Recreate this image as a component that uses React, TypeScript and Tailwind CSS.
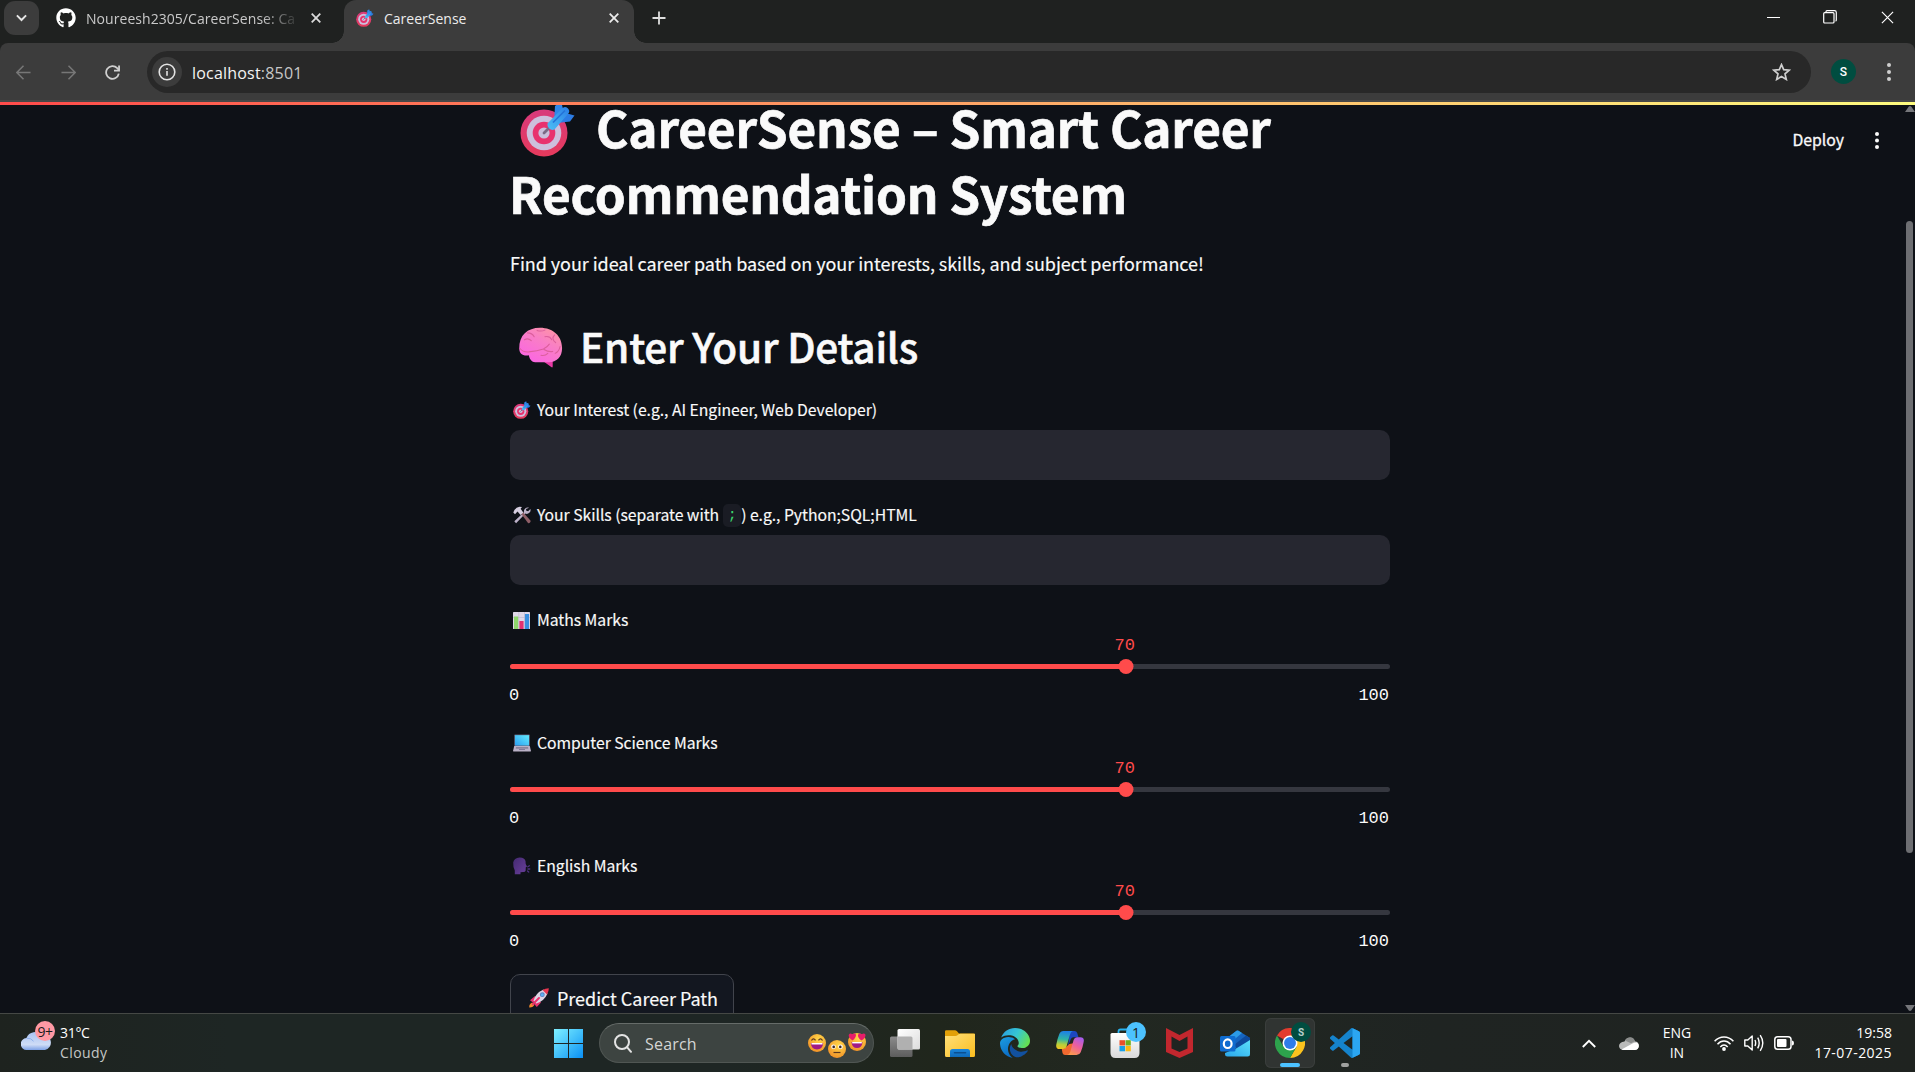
import React from "react";
import { FaGithub } from "react-icons/fa";

type IconProps = { className?: string };

/* ---------- Emoji drawings ---------- */

function Target({ className }: IconProps) {
  return (
    <svg viewBox="0 0 56 56" className={className}>
      <defs>
        <linearGradient id="tgRim" x1="0" y1="0" x2="0" y2="1">
          <stop offset="0" stopColor="#d83a7c" />
          <stop offset="1" stopColor="#e63a5c" />
        </linearGradient>
        <linearGradient id="tgDart" x1="0" y1="1" x2="1" y2="0">
          <stop offset="0" stopColor="#4cc0f5" />
          <stop offset="1" stopColor="#2b7fe6" />
        </linearGradient>
      </defs>
      <circle cx="24" cy="32" r="23.5" fill="url(#tgRim)" />
      <circle cx="24" cy="32" r="17.3" fill="#cdbfdc" />
      <circle cx="24" cy="32" r="11.3" fill="#e8326e" />
      <circle cx="24" cy="32" r="5.6" fill="#c9bfdb" />
      <path d="M24 32 32 24" stroke="#7b6a86" strokeWidth="2.8" strokeLinecap="round" />
      <path d="M34.5 13.5 35 5 41 .5 43.500 9.500 34.500 19Z" fill="#2f86e8" />
      <path d="M36 21 45.500 12 54.500 14.500 50 20.500 41.500 21.500Z" fill="#2c7ce4" />
      <path d="M27.500 22.500 42 7.500a3 3 0 0 1 6 5.500L34.500 28.500a5.200 5.200 0 0 1-7-6Z" fill="url(#tgDart)" />
      <path d="M33 21.500 45 9.500" stroke="#2473d8" strokeWidth="1.600" />
    </svg>
  );
}

function Brain({ className }: IconProps) {
  return (
    <svg viewBox="0 0 46 42" className={className}>
      <defs>
        <linearGradient id="brn" x1="1" y1="0" x2="0.3" y2="1">
          <stop offset="0" stopColor="#ff9a9c" />
          <stop offset="0.45" stopColor="#f97fc4" />
          <stop offset="1" stopColor="#fb66e2" />
        </linearGradient>
      </defs>
      <path d="M25 34 35 33v7.500q-.3 1.500-1.500.5L26 35.500Z" fill="#e83aa6" />
      <path d="M.7 22C.5 8.500 9 .8 22 .8 35.500.8 44.600 9.500 44.600 21.500 44.600 31 39 36 31 36H17c-3.500 0-5.500-2.500-6.500-7C4.500 30 .800 27.500.7 22Z" fill="url(#brn)" />
      <g fill="none" stroke="#dc5f9c" strokeWidth="1.100" strokeLinecap="round">
        <path d="M6 13q4-2 7 1M9 6q5 0 7 4" />
        <path d="M19 3.500q4 1.500 8-.3M27 10q5-1 7 3M37 8q-4 4 1 8" />
        <path d="M1.500 22q3 4 9 3.500 9-1 15-3 4-2 6-5" />
        <path d="M26 23q5 3 9 2M30 27q-3 3-7 2M42.500 20q-1 5-5 7" />
      </g>
    </svg>
  );
}

function Tools({ className }: IconProps) {
  return (
    <svg viewBox="0 0 18 18" className={className}>
      <path d="M16.200 1.800a3.800 3.800 0 0 0-5.200 4.400L1.300 15.300l1.800 1.900 9.300-9.600a3.800 3.800 0 0 0 5-4.600l-2.300 2.200-1.800-.5-.3-1.700Z" fill="#bdb2c9" />
      <path d="M8 7.500 9.800 6l7.600 8.600q.6 1-.4 2t-2 .3Z" fill="#8f5f68" />
      <path d="M.3 6.500Q2 1.500 6.500.8L9 1 7.600 2.700l2.700 3.700L7.600 9 4.500 5.500 2 8.200Z" fill="#d6cee0" />
    </svg>
  );
}

function BarChart({ className }: IconProps) {
  return (
    <svg viewBox="0 0 17 17" className={className}>
      <rect width="17" height="17" rx=".6" fill="#dfd8e8" />
      <path d="M0 5.500h17M5.800 0v17M11.500 0v17" stroke="#c3b8d0" strokeWidth=".7" />
      <rect x="1" y="4.500" width="4.200" height="12.500" fill="#8ed66a" />
      <rect x="6.400" y="9" width="4.200" height="8" fill="#e2316f" />
      <rect x="11.900" y="2" width="4.200" height="15" fill="#3a8fe0" />
    </svg>
  );
}

function Laptop({ className }: IconProps) {
  return (
    <svg viewBox="0 0 18 18" className={className}>
      <defs>
        <linearGradient id="lap" x1="0" y1="1" x2="1" y2="0">
          <stop offset="0" stopColor="#2d9ff0" />
          <stop offset="1" stopColor="#62ecff" />
        </linearGradient>
      </defs>
      <rect x="1.200" y=".5" width="15.600" height="11.500" rx=".8" fill="#5a5f78" />
      <rect x="2" y="1.200" width="14" height="10.300" fill="url(#lap)" />
      <path d="M1.200 12h15.600l1 4.200v1.300H.2v-1.300Z" fill="#b9b0c6" />
      <path d="M3 13h12l.3 1.700H2.700Z" fill="#8c849c" />
      <path d="M6 15.500h6" stroke="#82799a" strokeWidth="1" />
    </svg>
  );
}

function SpeakingHead({ className }: IconProps) {
  return (
    <svg viewBox="0 0 18 18" className={className}>
      <defs>
        <linearGradient id="spk" x1="0" y1="0" x2="1" y2="1">
          <stop offset="0" stopColor="#432a70" />
          <stop offset="1" stopColor="#6a3f9c" />
        </linearGradient>
      </defs>
      <path d="M1.800 17.200V13.500Q0 10.500.2 5.500 1 .6 6.500.4q5-.2 6 3.600l.2 3 1.300 2.500-1.200.8-.2 3.500q-.5 1.400-2.600 1.200l-2.500.2v2Z" fill="url(#spk)" />
      <path d="m14.800 9.800 1.600-1M15 12h1.800M14.500 14l1.200 1" stroke="#4d3280" strokeWidth="1.300" strokeLinecap="round" />
    </svg>
  );
}

function Rocket({ className }: IconProps) {
  return (
    <svg viewBox="0 0 20 20" className={className}>
      <path d="M.3 19.600q-.4-4 3-5.200l2.200 2.200q-1.200 3.200-5.200 3Z" fill="#f58a2c" />
      <path d="M1 12.200 6 8l3 3-5 3.500ZM7.800 19 12 14.500l-3-3L5.200 16Z" fill="#e9336f" />
      <path d="M4.500 12.800Q6.500 5 14.500 1.500l4 4Q15 13.500 7.200 15.500Z" fill="#dcd3e4" />
      <path d="M13.500 2Q16.500.3 19.800.2q0 3.300-1.800 6.300Z" fill="#e9354f" />
      <path d="M3.800 16.200 10 10" stroke="#e9336f" strokeWidth="2" strokeLinecap="round" />
      <circle cx="13.300" cy="6.700" r="2.400" fill="#5a7fc0" />
      <circle cx="13.300" cy="6.700" r="1.500" fill="#5cb2f4" />
    </svg>
  );
}

function Face({ kind, className }: { kind: "laugh" | "neutral" | "love"; className?: string }) {
  return (
    <svg viewBox="0 0 18 18" className={className} overflow="visible">
      <defs>
        <radialGradient id="face" cx="0.6" cy="0.3" r="0.8">
          <stop offset="0" stopColor="#ffd84a" />
          <stop offset="1" stopColor="#f08a24" />
        </radialGradient>
      </defs>
      <circle cx="9" cy="9" r="9" fill="url(#face)" />
      {kind === "laugh" && (
        <>
          <path d="M3.500 6.500Q5.500 3.500 7.500 6.300M10.500 6.300Q12.500 3.500 14.500 6.500" stroke="#5a3520" strokeWidth="1.300" fill="none" />
          <path d="M2.800 9h12.400q-.6 6.500-6.200 6.500t-6.200-6.500Z" fill="#a01a86" />
          <path d="M3.500 9h11v1.500h-11Z" fill="#fff" />
        </>
      )}
      {kind === "neutral" && (
        <>
          <circle cx="5.500" cy="6.800" r="2.300" fill="#fff" />
          <circle cx="12.500" cy="6.800" r="2.300" fill="#fff" />
          <circle cx="5.700" cy="6.900" r="1.300" fill="#3a2724" />
          <circle cx="12.300" cy="6.900" r="1.300" fill="#3a2724" />
          <path d="M5.500 12.500h7" stroke="#5a3520" strokeWidth="1.200" />
        </>
      )}
      {kind === "love" && (
        <>
          <path d="M4.500 7.500Q0 4.500.8 1.800 2-.3 4.200 1.200 6.800-.6 8 1.800 8 5 4.500 7.500Z" fill="#e81c6a" />
          <path d="M13.500 7.500Q9.500 5 10 1.800 11.500-.5 13.800 1.200 16.200-.5 17.500 1.800 17.800 5 13.500 7.500Z" fill="#e81c6a" />
          <path d="M3.500 9h11q-.5 6-5.500 6T3.500 9Z" fill="#a01a86" />
          <path d="M4.200 9h9.600v1.400H4.200Z" fill="#fff" />
        </>
      )}
    </svg>
  );
}

/* ---------- Browser chrome ---------- */

const UI = "font-['Open_Sans','Noto_Sans',sans-serif]";

function Cross({ className }: IconProps) {
  return (
    <svg viewBox="0 0 10 10" className={className} fill="none" stroke="currentColor">
      <path d="m.7.7 8.600 8.600M9.300.7.7 9.300" />
    </svg>
  );
}

function TabStrip() {
  return (
    <div className={`flex h-[43px] bg-[#1f2120] ${UI}`}>
      <div className="ml-1 mt-px flex h-[34px] w-[35px] shrink-0 items-center justify-center rounded-[11px] bg-[#3c3c3c]">
        <svg viewBox="0 0 12 8" className="h-[8px] w-[11px]" fill="none" stroke="#e6e6e6" strokeWidth="2.100">
          <path d="m1 1.200 5 5 5-5" />
        </svg>
      </div>
      <div className="flex h-9 w-[305px] shrink-0 items-center pl-[17px]">
        <FaGithub className="size-5 shrink-0 text-white" />
        <span className="ml-[10px] w-[209px] overflow-hidden whitespace-nowrap text-[14px] tracking-[0.05px] text-[#c9c9c9] [mask-image:linear-gradient(to_right,#000_175px,transparent_215px)]">
          Noureesh2305/CareerSense: Ca
        </span>
        <Cross className="ml-4 size-[10px] text-[#dadada] [stroke-width:1.800]" />
      </div>
      <div className="relative flex h-[43px] w-[290px] shrink-0 items-start rounded-t-[12px] bg-[#3c3c3c]">
        <div className="absolute -left-3 bottom-0 size-3 bg-[radial-gradient(circle_at_0_0,transparent_11.500px,#3c3c3c_12px)]" />
        <div className="absolute -right-3 bottom-0 size-3 bg-[radial-gradient(circle_at_100%_0,transparent_11.500px,#3c3c3c_12px)]" />
        <div className="flex h-9 w-full items-center pl-3">
          <Target className="size-[18px]" />
          <span className="ml-[10px] text-[14px] text-[#ececec]">CareerSense</span>
          <Cross className="ml-auto mr-[15px] size-[10px] text-[#ececec] [stroke-width:1.800]" />
        </div>
      </div>
      <svg viewBox="0 0 14 14" className="ml-[18px] mt-[11px] size-[14px]" stroke="#dedede" strokeWidth="1.800">
        <path d="M7 .5v13M.5 7h13" />
      </svg>
      <div className="ml-auto mr-[21px] mt-[9px] flex h-4 items-center">
        <div className="h-px w-[13px] bg-white" />
        <svg viewBox="0 0 14 14" className="ml-[43px] size-[14px]" fill="none" stroke="#fff" strokeWidth="1.200">
          <rect x=".7" y="2.700" width="10.300" height="10.300" rx="1" />
          <path d="M3 2V1.600Q3 .7 4 .7h7.500q1.800 0 1.800 1.800V10q0 1-.9 1" />
        </svg>
        <Cross className="ml-[44px] size-[13px] text-white [stroke-width:0.900]" />
      </div>
    </div>
  );
}

function Toolbar() {
  return (
    <div className={`flex h-[59px] items-start rounded-t-lg border-b-2 border-[#474747] bg-[#3c3c3c] pt-2 ${UI}`}>
      <div className="flex h-[42px] w-[147px] shrink-0 items-center pl-[16px] text-[#777]">
        <svg viewBox="0 0 16 16" className="size-[15px]" fill="none" stroke="currentColor" strokeWidth="1.600">
          <path d="M8 .8.9 8 8 15.200M1 8h14.500" />
        </svg>
        <svg viewBox="0 0 16 16" className="ml-[30px] size-[15px]" fill="none" stroke="currentColor" strokeWidth="1.600">
          <path d="m8 .8 7.100 7.200L8 15.200M15 8H.5" />
        </svg>
        <svg viewBox="0 0 16 16" className="ml-[29px] size-[15px] text-[#d0d0d0]" fill="none" stroke="currentColor" strokeWidth="1.900">
          <path d="M14.700 9.200A6.800 6.800 0 1 1 13 3.300L15 5.400" />
          <path d="M15 .6V6H9.600" />
        </svg>
      </div>
      <div className="flex h-[42px] w-[1664px] shrink-0 items-center rounded-full bg-[#282828] pl-[5px] pr-5">
        <div className="flex size-[30px] items-center justify-center rounded-full bg-[#3c3c3c]">
          <svg viewBox="0 0 18 18" className="size-[18px]" fill="none" stroke="#e3e3e3" strokeWidth="1.600">
            <circle cx="9" cy="9" r="7.800" />
            <path d="M9 8v4.800M9 5v1.800" />
          </svg>
        </div>
        <span className="relative top-px ml-[10px] text-[16px] tracking-[0.200px] text-[#c7c7c7]">
          <span className="text-[#f4f4f4]">localhost</span>:8501
        </span>
        <svg viewBox="0 0 19 18" className="ml-auto h-[18px] w-[19px]" fill="none" stroke="#cfcfcf" strokeWidth="1.700">
          <path d="m9.500 1.600 2.200 5.100 5.500.5-4.200 3.700 1.300 5.500-4.800-2.900-4.800 2.900 1.300-5.500L1.800 7.200l5.500-.5Z" />
        </svg>
      </div>
      <div className="ml-5 flex h-[41px] items-center">
        <div className="flex size-[25px] items-center justify-center rounded-full bg-[#004d40] font-['Roboto',sans-serif] text-[12px] font-medium text-white">S</div>
        <svg viewBox="0 0 4 18" className="ml-[31px] h-[18px] w-1" fill="#cfcfcf">
          <circle cx="2" cy="2" r="2" />
          <circle cx="2" cy="9" r="2" />
          <circle cx="2" cy="16" r="2" />
        </svg>
      </div>
    </div>
  );
}

/* ---------- Application ---------- */

function Label({ icon, children }: { icon: React.ReactNode; children: React.ReactNode }) {
  return (
    <div className="flex h-7 items-center whitespace-nowrap pl-[3px] text-[15.750px] leading-7 tracking-[-0.040px] [-webkit-text-stroke:0.150px_#fafafa]">
      <span className="flex w-[24px] shrink-0 items-center">{icon}</span>
      {children}
    </div>
  );
}

function TextField({ icon, label }: { icon: React.ReactNode; label: React.ReactNode }) {
  return (
    <div className="mb-[21px]">
      <Label icon={icon}>{label}</Label>
      <div className="mt-1.5 h-[50px] rounded-[10px] bg-[#262730]" />
    </div>
  );
}

function Slider({ icon, label, value }: { icon: React.ReactNode; label: string; value: number }) {
  return (
    <div className="h-[123px]">
      <Label icon={icon}>{label}</Label>
      <div className="relative mt-[30px] h-[5px] rounded-full bg-[#35373f]">
        <div className="h-full rounded-full bg-[#ff4b4b]" style={{ width: `${value}%` }} />
        <div className="absolute -top-[5px] size-[15px] -translate-x-1/2 rounded-full bg-[#ff4b4b]" style={{ left: `${value}%` }}>
          <span className="absolute -left-[4px] -top-[23px] font-['Liberation_Mono',monospace] text-[17px] leading-5 text-[#ff4b4b]">{value}</span>
        </div>
      </div>
      <div className="-ml-px mt-[17px] flex justify-between pr-px font-['Liberation_Mono',monospace] text-[17px] leading-5">
        <span>0</span>
        <span>100</span>
      </div>
    </div>
  );
}

function AppPage() {
  return (
    <div className="relative h-[908px] overflow-hidden bg-[#0e1117] font-['Noto_Sans_CJK_SC',sans-serif] text-[#fafafa]">
      <main className="ml-[510px] w-[880px]">
        <h1 className="-mt-[11px] text-[49.500px] font-bold leading-[66px] tracking-[-0.170px] [-webkit-text-stroke:0.700px_#fafafa]">
          <span className="flex">
            <Target className="ml-[10px] mr-[20px] mt-[7px] size-[56px] [-webkit-text-stroke:0]" />
            CareerSense – Smart Career
          </span>
          <span className="-ml-px block tracking-[-0.220px]">Recommendation System</span>
        </h1>
        <p className="mt-[21px] text-[18px] leading-8 tracking-[-0.050px] [-webkit-text-stroke:0.150px_#fafafa]">
          Find your ideal career path based on your interests, skills, and subject performance!
        </p>
        <h2 className="mt-[40px] flex h-[54px] items-center text-[40.500px] font-medium leading-[54px] tracking-[-0.220px] [-webkit-text-stroke:0.600px_#fafafa]">
          <Brain className="ml-[8px] mr-[16px] mt-[3px] h-[41px] w-[46px]" />
          Enter Your Details
        </h2>
        <div className="mt-[23px]">
          <TextField icon={<Target className="size-[18px]" />} label="Your Interest (e.g., AI Engineer, Web Developer)" />
          <TextField
            icon={<Tools className="size-[18px]" />}
            label={
              <>
                Your Skills (separate with
                <code className="ml-1 flex h-[23px] w-[18px] items-center justify-center rounded-[5px] bg-[#1a1c24] pt-[2px] font-['Liberation_Mono',monospace] text-[15px] text-[#3dd56d] [-webkit-text-stroke:0]">;</code>
                ) e.g., Python;SQL;HTML
              </>
            }
          />
          <Slider icon={<BarChart className="size-[17px]" />} label="Maths Marks" value={70} />
          <Slider icon={<Laptop className="size-[18px]" />} label="Computer Science Marks" value={70} />
          <Slider icon={<SpeakingHead className="size-[18px]" />} label="English Marks" value={70} />
          <button className="-mt-px flex h-[50px] w-[224px] items-center rounded-[10px] border border-[#41444c] bg-[#131720] pb-[3px] pl-[18px] text-[18px] leading-8 [-webkit-text-stroke:0.150px_#fafafa]">
            <Rocket className="mr-[8px] size-5" />
            <span className="whitespace-nowrap tracking-[-0.030px]">Predict Career Path</span>
          </button>
        </div>
      </main>
      <div className="absolute right-[36px] top-[20px] flex items-center">
        <span className="text-[15.750px] leading-[30px] [-webkit-text-stroke:0.300px_#fafafa]">Deploy</span>
        <svg viewBox="0 0 4 17" className="ml-[31px] h-[17px] w-1" fill="#fafafa">
          <circle cx="2" cy="2" r="2" />
          <circle cx="2" cy="8.500" r="2" />
          <circle cx="2" cy="15" r="2" />
        </svg>
      </div>
      <div className="absolute right-0 top-0 flex h-full w-[11px] flex-col items-center">
        <svg viewBox="0 0 10 6" className="mt-px h-[6px] w-[10px] shrink-0" fill="#75767a">
          <path d="M3.800.5Q5-.4 6.200.5L10 6H0Z" />
        </svg>
        <div className="mr-px mt-[109px] h-[632px] w-[7px] shrink-0 rounded-full bg-[#6d6e72]" />
        <svg viewBox="0 0 10 6" className="mb-[2px] mt-auto h-[6px] w-[10px] shrink-0" fill="#75767a">
          <path d="M0 0h10L6.200 5.500Q5 6.400 3.800 5.500Z" />
        </svg>
      </div>
    </div>
  );
}

/* ---------- Taskbar icons ---------- */

function WindowsLogo() {
  return (
    <svg viewBox="0 0 29 29" className="size-[29px]">
      <defs>
        <linearGradient id="win" gradientUnits="userSpaceOnUse" x1="0" y1="0" x2="29" y2="29">
          <stop offset="0" stopColor="#7ff0ff" />
          <stop offset="0.5" stopColor="#45c2fb" />
          <stop offset="1" stopColor="#0a90f6" />
        </linearGradient>
      </defs>
      <path d="M0 0h14v14H0zM15 0h14v14H15zM0 15h14v14H0zM15 15h14v14H15z" fill="url(#win)" />
    </svg>
  );
}

function TaskView() {
  return (
    <svg viewBox="0 0 30 28" className="h-7 w-[30px]">
      <defs>
        <linearGradient id="tv1" x1="0" y1="0" x2="1" y2="1">
          <stop offset="0" stopColor="#ffffff" />
          <stop offset="1" stopColor="#dcdcdc" />
        </linearGradient>
        <linearGradient id="tv2" x1="0" y1="0" x2="0" y2="1">
          <stop offset="0" stopColor="#8b8b8b" />
          <stop offset="1" stopColor="#5d5d5d" />
        </linearGradient>
      </defs>
      <rect x="0" y="7.500" width="22.500" height="20.500" rx="1.500" fill="url(#tv2)" />
      <rect x="7.500" y="0" width="22.500" height="20.500" rx="1.500" fill="url(#tv1)" />
      <path d="M7.500 7.500H21a1.500 1.500 0 0 1 1.500 1.500v11.500H9a1.500 1.500 0 0 1-1.500-1.500Z" fill="#b0b0b0" />
    </svg>
  );
}

function Folder() {
  return (
    <svg viewBox="0 0 30 27" className="mt-px h-[27px] w-[30px]">
      <defs>
        <linearGradient id="fld" x1="0" y1="0" x2="1" y2="1">
          <stop offset="0" stopColor="#ffe07a" />
          <stop offset="1" stopColor="#fbbd1e" />
        </linearGradient>
        <linearGradient id="fldB" x1="0" y1="0" x2="0" y2="1">
          <stop offset="0" stopColor="#1a86dc" />
          <stop offset="1" stopColor="#0f6ab8" />
        </linearGradient>
      </defs>
      <path d="M0 1.500Q0 .3 1.300.3H10q1 0 1.800.8L14 3.500h14.500q1.500 0 1.500 1.500v6H0Z" fill="#e2a008" />
      <path d="M0 6h10.500q1.200 0 2-.8l.8-.7q.8-.7 2-.7H30v21.700q0 1.500-1.500 1.500h-27Q0 27 0 25.500Z" fill="url(#fld)" />
      <path d="M5 27v-5.500q0-2.500 2.500-2.500h15q2.500 0 2.500 2.500V27Z" fill="url(#fldB)" />
      <path d="M9.500 22.700h11" stroke="#0b4f90" strokeWidth="1.600" strokeLinecap="round" />
    </svg>
  );
}

function EdgeLogo() {
  return (
    <svg viewBox="0 0 24 24" className="size-[30px]">
      <defs>
        <linearGradient id="ed1" x1="0" y1="0.2" x2="1" y2="0.6">
          <stop offset="0" stopColor="#2a9fe0" />
          <stop offset="0.5" stopColor="#36c6d3" />
          <stop offset="1" stopColor="#66e04f" />
        </linearGradient>
        <linearGradient id="ed2" x1="0" y1="0" x2="0.4" y2="1">
          <stop offset="0" stopColor="#1b9de2" />
          <stop offset="1" stopColor="#0c6cc4" />
        </linearGradient>
      </defs>
      <path fill="url(#ed1)" d="M11.960.06q1.700 0 3.330.39 1.630.38 3.070 1.150 1.430.77 2.620 1.930 1.180 1.160 1.980 2.700.49.94.76 1.960.28 1 .28 2.080 0 .89-.23 1.700-.24.8-.69 1.480-.45.68-1.100 1.220-.64.53-1.450.88-.54.24-1.110.36-.58.13-1.160.13-.42 0-.97-.03-.54-.03-1.100-.12-.55-.1-1.050-.28-.5-.19-.84-.5-.12-.09-.23-.24-.1-.16-.1-.33 0-.15.16-.35.16-.2.35-.5.2-.28.36-.68.16-.4.16-.95 0-1.060-.4-1.960-.4-.91-1.060-1.640-.66-.74-1.520-1.280-.86-.55-1.790-.89-.84-.3-1.720-.44-.87-.14-1.760-.14-1.550 0-3.060.45T.94 7.550q.71-1.740 1.810-3.130 1.100-1.380 2.520-2.350Q6.680 1.100 8.370.58q1.700-.52 3.580-.52Z" />
      <path fill="url(#ed2)" d="M6.360 16.590q0 1.100.27 2.150.27 1.060.78 2.030.51.960 1.240 1.770.74.82 1.660 1.400-1.470-.2-2.800-.74-1.330-.55-2.480-1.370-1.150-.83-2.080-1.900-.92-1.070-1.580-2.330T.36 14.940Q0 13.540 0 12.060q0-.81.32-1.490.31-.68.83-1.230.53-.55 1.200-.96.66-.4 1.350-.66.74-.27 1.500-.39.78-.12 1.550-.12.7 0 1.420.1.72.12 1.400.35.68.23 1.320.57.63.35 1.160.83-.35 0-.7.070-.33.070-.65.230-.63.280-1.200.740-.57.460-1.050 1.040-.48.580-.87 1.260-.38.670-.65 1.390-.27.710-.42 1.440-.15.720-.15 1.380Z" />
      <path fill="#12519f" d="M21.860 17.860q.14 0 .25.12.1.13.1.25t-.11.33l-.32.46-.43.53-.44.5q-.26.25-.38.37l-.22.23q-.58.53-1.340 1.040-.76.51-1.600.91-.86.4-1.740.64t-1.670.24q-.9 0-1.690-.28-.8-.28-1.480-.78-.68-.5-1.220-1.170-.53-.66-.92-1.440-.38-.77-.58-1.600-.2-.83-.2-1.670 0-1 .32-1.960.33-.97.87-1.800.14.950.55 1.770.41.82 1.020 1.500.6.680 1.380 1.210.78.54 1.640.9.860.36 1.770.56.92.2 1.800.2 1.120 0 2.180-.24 1.060-.23 2.060-.72l.2-.1.2-.05Z" />
    </svg>
  );
}

function CopilotLogo() {
  return (
    <svg viewBox="0 0 28 26" className="h-[26px] w-7">
      <defs>
        <linearGradient id="cpA" x1="0.4" y1="0" x2="0.3" y2="1">
          <stop offset="0" stopColor="#1d7fe8" />
          <stop offset="0.45" stopColor="#2fb5a5" />
          <stop offset="0.75" stopColor="#b8cf3a" />
          <stop offset="1" stopColor="#f2c21e" />
        </linearGradient>
        <linearGradient id="cpB" x1="0.8" y1="0" x2="0.3" y2="1">
          <stop offset="0" stopColor="#a45cf0" />
          <stop offset="0.5" stopColor="#ee5f9b" />
          <stop offset="1" stopColor="#fb9a4e" />
        </linearGradient>
      </defs>
      <path d="M14 1h4.500q2 0 2.700 2l1.300 4.200h-5q-2 0-2.700 2L12 16Z" fill="#1c47c0" />
      <path d="M9 25h4.500q2.200 0 2.800-2l3-10-6 1-5.500 5H5.800L6.500 23q.6 2 2.500 2Z" fill="#f0692f" />
      <path d="M7.500 1H17q-2 .5-2.800 3l-3.700 12.500q-.8 2.500-3.200 2.500H3.500Q-.5 19 .3 14.500q.8-5 3-10.500Q4.500 1 7.500 1Z" fill="url(#cpA)" />
      <path d="M20.500 25H11q2.500-.5 3.200-3l3.500-12.300q.8-2.500 3.200-2.500h3.600q4 0 3.200 4.500-.8 5-3 10.500-1.200 2.800-4.200 2.800Z" fill="url(#cpB)" />
    </svg>
  );
}

function StoreLogo() {
  return (
    <svg viewBox="0 0 30 30" className="size-[30px]">
      <defs>
        <linearGradient id="sto" x1="0" y1="0" x2="0" y2="1">
          <stop offset="0" stopColor="#ffffff" />
          <stop offset="1" stopColor="#d9d9d9" />
        </linearGradient>
      </defs>
      <path d="M8.500 6V3.500q0-2 2-2h9q2 0 2 2V6" fill="none" stroke="#29b2ee" strokeWidth="1.800" />
      <path d="M.5 6.500q0-1.500 1.500-1.500h26q1.500 0 1.500 1.500V25q0 5-5 5h-19q-5 0-5-5Z" fill="url(#sto)" />
      <path d="M9.500 12.200H15v5.300H9.500z" fill="#e8502a" />
      <path d="M15.500 12.200h5.300v5.300h-5.300z" fill="#6fae1d" />
      <path d="M9.500 18H15v5.300H9.500z" fill="#17a0e8" />
      <path d="M15.500 18h5.300v5.300h-5.300z" fill="#f9b812" />
    </svg>
  );
}

function ShieldM() {
  return (
    <svg viewBox="0 0 27 30" className="mr-[2px] h-[30px] w-[27px]">
      <path d="M0 0 13.500 7 27 0v24L13.500 30 0 24Z" fill="#c2272e" />
      <path d="M5.500 8.500 13.500 13l8-4.500v12L13.500 24l-8-3.500Z" fill="#1f2421" />
    </svg>
  );
}

function OutlookLogo() {
  return (
    <svg viewBox="0 0 30 27" className="h-[27px] w-[30px]">
      <defs>
        <linearGradient id="ol" x1="0" y1="1" x2="1" y2="0">
          <stop offset="0" stopColor="#2aa6ea" />
          <stop offset="1" stopColor="#5ce0fb" />
        </linearGradient>
      </defs>
      <path d="M4 10 16.500.8q1-.8 2 0L30 8v10H4Z" fill="#1565c0" />
      <path d="m8 7.500 8.500-6.700q1-.8 2 0L22 3 10 13Z" fill="#2c9be6" />
      <path d="M14 15 26 5.500 30 8v4L18 20Z" fill="#0d4a9c" />
      <path d="M30 10v14q0 2.500-2.500 2.500h-20Q5 26.500 5 24v-1l12-5Z" fill="url(#ol)" />
      <rect x="0" y="6" width="15.500" height="15.500" rx="1.500" fill="#0f6cd0" />
      <ellipse cx="7.700" cy="13.700" rx="3.900" ry="4.300" fill="none" stroke="#fff" strokeWidth="2.200" />
    </svg>
  );
}

function ChromeLogo() {
  return (
    <svg viewBox="0 0 48 48" className="size-[30px]">
      <path d="M24 24 3.200 12A24 24 0 0 1 44.800 12Z" fill="#e33b2e" />
      <path d="M24 12h20.800A24 24 0 0 1 24 48l10.400-18Z" fill="#fcc31e" />
      <path d="M3.200 12 13.600 30 34.400 30 24 48A24 24 0 0 1 3.200 12Z" fill="#2da24c" />
      <circle cx="24" cy="24" r="12" fill="#fff" />
      <circle cx="24" cy="24" r="9.500" fill="#2f7de9" />
    </svg>
  );
}

function VsCodeLogo() {
  return (
    <svg viewBox="0 0 24 24" className="size-[30px]">
      <path fill="#1583cc" d="M23.150 2.587 18.210.21a1.494 1.494 0 0 0-1.705.29l-9.460 8.630-4.120-3.128a.999.999 0 0 0-1.276.057L.327 7.261A1 1 0 0 0 .326 8.740L3.899 12 .326 15.260a1 1 0 0 0 .001 1.479L1.650 17.940a.999.999 0 0 0 1.276.057l4.120-3.128 9.460 8.630a1.492 1.492 0 0 0 1.704.29l4.942-2.377A1.500 1.500 0 0 0 24 20.060V3.939a1.500 1.500 0 0 0-.85-1.352zm-5.146 14.861L10.826 12l7.178-5.448v10.896z" />
      <path fill="#2ba6f2" d="M18.004.15 23.150 2.587A1.500 1.500 0 0 1 24 3.939V20.060a1.500 1.500 0 0 1-.85 1.352L18.004 23.850Z" />
    </svg>
  );
}

function Tile({ children, active }: { children: React.ReactNode; active?: boolean }) {
  return (
    <div className={`relative flex size-[50px] shrink-0 items-center justify-center rounded-md ${active ? "bg-[#303432] ring-1 ring-inset ring-[#3a3e3c]" : ""}`}>
      {children}
    </div>
  );
}

function Taskbar() {
  return (
    <div className={`flex h-[59px] items-start border-t border-[#454845] bg-[linear-gradient(90deg,#1e231f_0%,#1e2624_12%,#1e2624_38%,#20261c_49%,#222821_58%,#1f2422_75%,#1f2320_100%)] pt-1 text-white ${UI}`}>
      <div className="flex h-[50px] w-[543px] shrink-0 items-start pl-[21px]">
        <div className="relative mt-[9px] h-[24px] w-[30px]">
          <svg viewBox="0 0 30 20" className="mt-[3px] h-[20px] w-[30px]">
            <defs>
              <linearGradient id="cld" x1="0" y1="0" x2="0" y2="1">
                <stop offset="0" stopColor="#a9c4f4" />
                <stop offset="0.7" stopColor="#cfdcf6" />
                <stop offset="1" stopColor="#7fa2e6" />
              </linearGradient>
            </defs>
            <path d="M6 20a6 6 0 0 1-.5-12A9 9 0 0 1 21 5.500 7.300 7.300 0 0 1 24 20Z" fill="url(#cld)" />
            <path d="M5.500 8.200q4.500-.5 7 3" stroke="#8fb0ec" fill="none" />
          </svg>
          <div className="absolute -top-[6px] left-[14px] flex size-5 items-center justify-center rounded-full bg-[#ff99a4] text-[14px] tracking-[-0.500px] text-[#1c1c1c]">9+</div>
        </div>
        <div className="ml-[9px] mt-[5px] text-[14px] leading-5">
          <div className="tracking-[-0.300px]">31°C</div>
          <div className="tracking-[0.400px] text-[#c4c7c5]">Cloudy</div>
        </div>
      </div>
      <Tile><WindowsLogo /></Tile>
      <div className="ml-[6px] mr-[6px] mt-[5px] flex h-10 w-[275px] shrink-0 items-center rounded-full border border-[#505653] border-t-[#666c69] bg-[#3d4441] pl-[14px] pr-[7px]">
        <svg viewBox="0 0 18 19" className="h-[19px] w-[18px]" fill="none" stroke="#e4e4e4" strokeWidth="2" strokeLinecap="round">
          <circle cx="8" cy="8" r="7" />
          <path d="m13 13.200 4 4.600" />
        </svg>
        <span className="relative top-px ml-[13px] text-[16px] tracking-[0.200px] text-[#d4d6d5]">Search</span>
        <div className="ml-auto flex items-center gap-[2px]">
          <Face kind="laugh" className="size-[18px]" />
          <Face kind="neutral" className="mt-[11px] size-[18px]" />
          <Face kind="love" className="-mt-[2px] size-[18px]" />
        </div>
      </div>
      <div className="flex gap-[5px]">
        <Tile><TaskView /></Tile>
        <Tile><Folder /></Tile>
        <Tile><EdgeLogo /></Tile>
        <Tile><CopilotLogo /></Tile>
        <Tile>
          <StoreLogo />
          <div className="absolute left-[26px] top-[4px] flex size-5 items-center justify-center rounded-full bg-[#4cc2ff] text-[14px] text-[#1c1c1c]">1</div>
        </Tile>
        <Tile><ShieldM /></Tile>
        <Tile><OutlookLogo /></Tile>
        <Tile active>
          <ChromeLogo />
          <div className="absolute left-[26px] top-[4px] flex size-5 items-center justify-center rounded-full bg-[#004d40] font-['Roboto',sans-serif] text-[10px] font-bold text-[#b9d0cb]">S</div>
          <div className="absolute bottom-px left-[15px] h-1 w-5 rounded-full bg-[#4cc2ff]" />
        </Tile>
        <Tile>
          <VsCodeLogo />
          <div className="absolute bottom-px left-[21px] h-1 w-2 rounded-full bg-[#a0a19f]" />
        </Tile>
      </div>
      <div className="ml-auto mr-[23px] flex h-[50px] items-center">
        <svg viewBox="0 0 14 9" className="h-[9px] w-[14px]" fill="none" stroke="#fff" strokeWidth="1.900">
          <path d="m.8 8 6.200-6.200L13.200 8" />
        </svg>
        <svg viewBox="0 0 20 13" className="ml-[23px] h-[13px] w-5">
          <path d="M5.500 4.500a5.500 5.500 0 0 1 10.300-.3Q20 5 19.800 9q-.6 4-4.300 4H4Q.3 12.500 0 9q.2-4 5.500-4.500Z" fill="#b9bab9" />
          <path d="M6 3.500Q8.500-.3 12 .2q3 .6 4 4l-4 2Z" fill="#8b8d8c" />
          <path d="m2.500 12.500 11-6q2-1.200 4.500-1Q20 6.500 19.900 9q-.5 4-4.200 4H4Z" fill="#fff" />
        </svg>
        <div className="ml-[23px] w-[29px] text-center text-[14px] leading-5">
          <div>ENG</div>
          <div>IN</div>
        </div>
        <svg viewBox="0 0 20 15" className="ml-[23px] h-[15px] w-5" fill="none" stroke="#fff" strokeWidth="1.500">
          <path d="M.6 5.300Q4.500 1 10 1t9.400 4.300M3.500 8.200Q6.300 5 10 5t6.500 3.200M6.300 10.900Q8 9 10 9t3.700 1.900" />
          <circle cx="10" cy="13" r="1.900" fill="#fff" stroke="none" />
        </svg>
        <svg viewBox="0 0 20 18" className="ml-[10px] h-[18px] w-5" fill="none" stroke="#fff" strokeWidth="1.400" strokeLinejoin="round">
          <path d="M.8 6v6h3l4.400 4V2L3.800 6Z" />
          <path d="M11 6q1.300 3 0 6M13.700 3.700q3 5.300 0 10.600M16.200 1.200q5.200 7.800 0 15.600" />
        </svg>
        <svg viewBox="0 0 20 14" className="ml-[10px] h-[14px] w-5">
          <rect x=".8" y=".8" width="16.200" height="12.400" rx="2.800" fill="none" stroke="#fff" strokeWidth="1.500" />
          <rect x="3" y="3" width="9.500" height="8" rx="1" fill="#fff" />
          <path d="M18 4.500q2 0 2 2.500t-2 2.500Z" fill="#fff" />
        </svg>
        <div className="ml-[20px] text-right text-[14px] leading-5">
          <div>19:58</div>
          <div className="tracking-[0.450px]">17-07-2025</div>
        </div>
      </div>
    </div>
  );
}

export default function App() {
  return (
    <div className="h-[1072px] w-[1915px] overflow-hidden bg-[#1f2120]">
      <TabStrip />
      <Toolbar />
      <div className="h-[3px] bg-[linear-gradient(90deg,#ff4b4b,#fffd80)]" />
      <AppPage />
      <Taskbar />
    </div>
  );
}
